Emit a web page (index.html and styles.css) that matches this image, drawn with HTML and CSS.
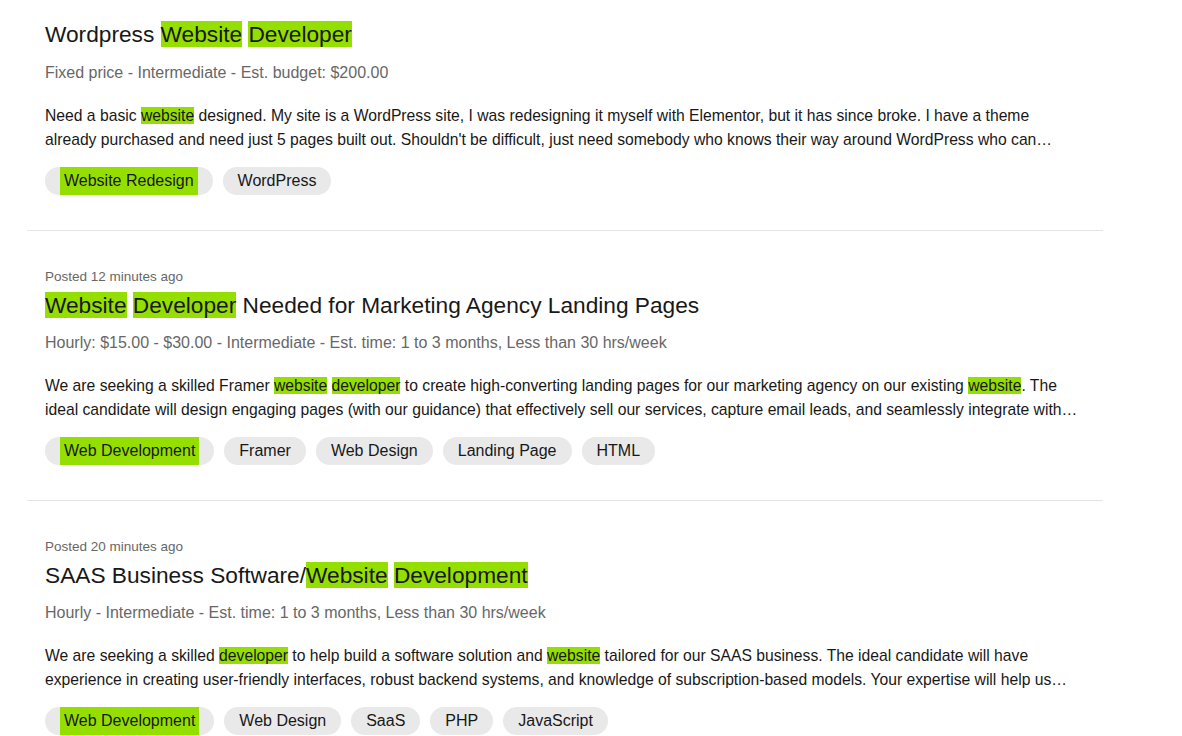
FILE: index.html
```html
<!DOCTYPE html>
<html lang="en">
<head>
<meta charset="utf-8">
<title>Jobs</title>
<link rel="stylesheet" href="styles.css">
</head>
<body>
<main class="feed">
  <article class="job job-first">
    <h2 class="job-title">Wordpress <mark>Website</mark> <mark>Developer</mark></h2>
    <p class="job-meta">Fixed price - Intermediate - Est. budget: $200.00</p>
    <p class="job-desc">Need a basic <mark>website</mark> designed. My site is a WordPress site, I was redesigning it myself with Elementor, but it has since broke. I have a theme already purchased and need just 5 pages built out. Shouldn't be difficult, just need somebody who knows their way around WordPress who can…</p>
    <div class="chips">
      <span class="chip"><mark>Website Redesign</mark></span>
      <span class="chip">WordPress</span>
    </div>
  </article>
  <article class="job">
    <p class="job-posted">Posted 12 minutes ago</p>
    <h2 class="job-title"><mark>Website</mark> <mark>Developer</mark> Needed for Marketing Agency Landing Pages</h2>
    <p class="job-meta">Hourly: $15.00 - $30.00 - Intermediate - Est. time: 1 to 3 months, Less than 30 hrs/week</p>
    <p class="job-desc">We are seeking a skilled Framer <mark>website</mark> <mark>developer</mark> to create high-converting landing pages for our marketing agency on our existing <mark>website</mark>. The ideal candidate will design engaging pages (with our guidance) that effectively sell our services, capture email leads, and seamlessly integrate with…</p>
    <div class="chips">
      <span class="chip"><mark>Web Development</mark></span>
      <span class="chip">Framer</span>
      <span class="chip">Web Design</span>
      <span class="chip">Landing Page</span>
      <span class="chip">HTML</span>
    </div>
  </article>
  <article class="job">
    <p class="job-posted">Posted 20 minutes ago</p>
    <h2 class="job-title">SAAS Business Software/<mark>Website</mark> <mark>Development</mark></h2>
    <p class="job-meta">Hourly - Intermediate - Est. time: 1 to 3 months, Less than 30 hrs/week</p>
    <p class="job-desc">We are seeking a skilled <mark>developer</mark> to help build a software solution and <mark>website</mark> tailored for our SAAS business. The ideal candidate will have experience in creating user-friendly interfaces, robust backend systems, and knowledge of subscription-based models. Your expertise will help us…</p>
    <div class="chips">
      <span class="chip"><mark>Web Development</mark></span>
      <span class="chip">Web Design</span>
      <span class="chip">SaaS</span>
      <span class="chip">PHP</span>
      <span class="chip">JavaScript</span>
    </div>
  </article>
</main>
</body>
</html>
```

FILE: styles.css
```css
html, body {
  margin: 0;
  padding: 0;
  background: #ffffff;
}

body {
  font-family: "Liberation Sans", Arial, sans-serif;
  color: #181818;
}

.feed {
  margin-left: 27px;
  width: 1076px;
}

.job {
  padding: 36px 18px 35px 18px;
  border-bottom: 1px solid #e4e4e4;
}

.job-first {
  padding-top: 20px;
}

.job p,
.job h2 {
  margin: 0;
}

mark {
  background: #95df00;
  color: inherit;
}

.job-posted {
  font-size: 13.5px;
  line-height: 20px;
  color: #676767;
  margin-bottom: 4px !important;
}

.job-title {
  font-size: 22.7px;
  line-height: 28px;
  font-weight: 400;
  color: #181818;
}

.job-meta {
  font-size: 16px;
  line-height: 24px;
  color: #676767;
  margin-top: 12px !important;
}

.job-first .job-meta {
  margin-top: 13px !important;
}

.job-desc {
  max-width: 1035px;
  font-size: 15.7px;
  line-height: 24px;
  color: #181818;
  margin-top: 19px !important;
}

.chips {
  display: flex;
  flex-wrap: wrap;
  gap: 10px;
  margin-top: 15px;
}

.chip {
  display: inline-flex;
  align-items: center;
  height: 28px;
  padding: 0 15px;
  border-radius: 14px;
  background: #e9e9e9;
  font-size: 16px;
  color: #181818;
}

.chip mark {
  display: inline-flex;
  align-items: center;
  height: 100%;
  padding: 0 4px;
}
```
